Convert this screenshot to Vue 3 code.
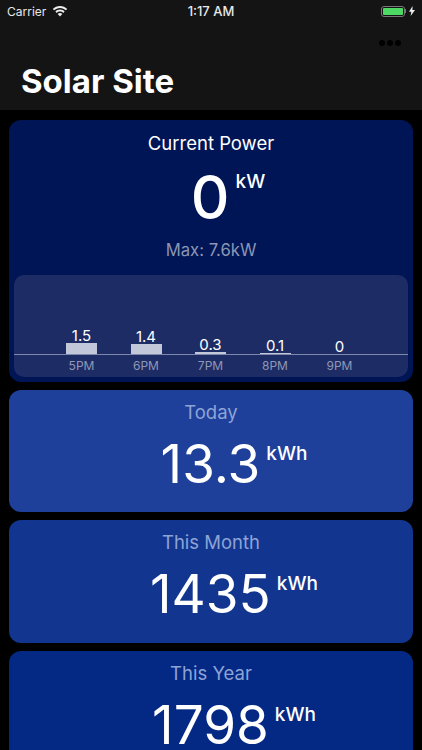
<template>
  <div class="screen">
    <header class="nav">
      <div class="status-bar">
        <div class="status-left">
          <span>Carrier</span>
          <svg class="wifi" viewBox="0 0 16 12" width="16" height="12">
            <path d="M8 1C5.2 1 2.7 2.1.8 3.9l1.3 1.4C3.6 3.8 5.7 2.9 8 2.9s4.4.9 5.9 2.4l1.3-1.4C13.3 2.1 10.8 1 8 1z" fill="#eee" />
            <path d="M8 4.6c-1.8 0-3.4.7-4.6 1.9l1.3 1.4C5.6 7 6.7 6.5 8 6.5s2.4.5 3.3 1.4l1.3-1.4C11.4 5.3 9.8 4.6 8 4.6z" fill="#eee" />
            <path d="M8 8.1c-.9 0-1.7.4-2.3 1L8 11.5l2.3-2.4c-.6-.6-1.4-1-2.3-1z" fill="#eee" />
          </svg>
        </div>
        <span class="status-time">1:17 AM</span>
        <div class="status-right">
          <div class="battery"><div class="battery-fill"></div></div>
          <div class="battery-cap"></div>
          <svg class="bolt" viewBox="0 0 6 10" width="6" height="10">
            <path d="M3.6 0L0 5.7h2.3L1.6 10 6 3.9H3.4z" fill="#eee" />
          </svg>
        </div>
      </div>
      <div class="more">
        <span class="dot"></span><span class="dot"></span><span class="dot"></span>
      </div>
      <h1 class="title">Solar Site</h1>
    </header>

    <main class="cards">
      <section class="card current">
        <div class="current-label">Current Power</div>
        <div class="reading current-reading">
          <span class="big">0</span><span class="unit current-unit">kW</span>
        </div>
        <div class="max">Max: 7.6kW</div>

        <div class="chart">
          <div class="bars">
            <div v-for="b in hours" :key="b.hour" class="col">
              <span class="bar-value">{{ b.value }}</span>
              <div class="bar" :style="{ height: b.height + 'px' }"></div>
            </div>
          </div>
          <div class="hours">
            <span v-for="b in hours" :key="b.hour" class="hour">{{ b.hour }}</span>
          </div>
        </div>
      </section>

      <section v-for="c in totals" :key="c.label" class="card total" :style="{ background: c.color }">
        <div class="total-label">{{ c.label }}</div>
        <div class="reading">
          <span class="big total-value">{{ c.value }}</span><span class="unit">kWh</span>
        </div>
      </section>
    </main>
  </div>
</template>

<script setup>
const hours = [
  { hour: '5PM', value: '1.5', height: 11 },
  { hour: '6PM', value: '1.4', height: 10 },
  { hour: '7PM', value: '0.3', height: 2 },
  { hour: '8PM', value: '0.1', height: 1 },
  { hour: '9PM', value: '0', height: 0 },
]

const totals = [
  { label: 'Today', value: '13.3', color: '#1e409a' },
  { label: 'This Month', value: '1435', color: '#12368f' },
  { label: 'This Year', value: '1798', color: '#032984' },
]
</script>

<style>
html,
body {
  margin: 0;
  background: #000;
}
</style>

<style scoped>
.screen {
  width: 422px;
  height: 750px;
  overflow: hidden;
  background: #000;
  color: #fff;
  font-family: Inter, "Liberation Sans", sans-serif;
}

.nav {
  height: 110px;
  background: #141414;
  display: flex;
  flex-direction: column;
}

.status-bar {
  height: 22px;
  display: grid;
  grid-template-columns: 1fr auto 1fr;
  align-items: center;
  padding: 0 7px;
  font-size: 12px;
  color: #e8e8e8;
}

.status-left {
  display: flex;
  align-items: center;
  gap: 6px;
}

.status-time {
  font-size: 13px;
  font-weight: 500;
}

.status-right {
  display: flex;
  align-items: center;
  justify-content: flex-end;
}

.battery {
  width: 24px;
  height: 11px;
  box-sizing: border-box;
  border: 1px solid #777;
  border-radius: 3px;
  padding: 1px;
}

.battery-fill {
  height: 100%;
  background: #4cd964;
  border-radius: 1px;
}

.battery-cap {
  width: 1px;
  height: 4px;
  background: #777;
  margin-right: 3px;
}

.more {
  display: flex;
  justify-content: flex-end;
  gap: 2px;
  padding: 18px 21px 0 0;
}

.dot {
  width: 6px;
  height: 6px;
  border-radius: 50%;
  background: #000;
}

.title {
  margin: 15px 0 0 21px;
  font-size: 33px;
  line-height: 40px;
  font-weight: 700;
  letter-spacing: 0;
}

.cards {
  display: flex;
  flex-direction: column;
  gap: 8px;
  padding: 10px 9px 0;
}

.card {
  border-radius: 12px;
  text-align: center;
  flex-shrink: 0;
}

.current {
  height: 262px;
  background: #001555;
  padding: 11px 5px 0;
  box-sizing: border-box;
  display: flex;
  flex-direction: column;
}

.current-label {
  font-size: 18.5px;
  line-height: 24px;
}

.reading {
  display: flex;
  justify-content: center;
  align-items: flex-start;
}

.current-reading {
  margin-top: 6px;
  padding-left: 34px;
}

.big {
  font-size: 60px;
  line-height: 72px;
  font-weight: 500;
}

.unit {
  font-size: 19px;
  line-height: 24px;
  margin: 14px 0 0 6px;
  font-weight: 500;
}

.current-unit {
  margin: 9px 0 0 6px;
}

.max {
  margin-top: 6px;
  font-size: 16.7px;
  line-height: 22px;
  color: #8b96b5;
}

.chart {
  margin-top: 14px;
  height: 102px;
  background: #1e2c65;
  border-radius: 10px;
  display: flex;
  flex-direction: column;
}

.bars {
  height: 80px;
  box-sizing: border-box;
  display: flex;
  align-items: flex-end;
  gap: 33.5px;
  padding-left: 52px;
  border-bottom: 1px solid #7d88ac;
}

.col {
  width: 31px;
  display: flex;
  flex-direction: column;
  align-items: center;
}

.bar-value {
  font-size: 15px;
  line-height: 18px;
  margin-bottom: -2px;
}

.bar {
  width: 31px;
  background: #c2c7d9;
}

.hours {
  display: flex;
  gap: 33.5px;
  padding: 4px 0 0 52px;
}

.hour {
  width: 31px;
  font-size: 12px;
  line-height: 14px;
  color: #8f98b6;
  display: flex;
  justify-content: center;
  white-space: nowrap;
}

.total {
  height: 122.3px;
  padding-top: 10px;
  box-sizing: border-box;
}

.total-label {
  font-size: 18.5px;
  line-height: 24px;
  color: #8ea3d6;
}

.total .reading {
  margin-top: 4px;
  padding-left: 46px;
}

.total-value {
  font-weight: 400;
  font-size: 53px;
}
</style>
